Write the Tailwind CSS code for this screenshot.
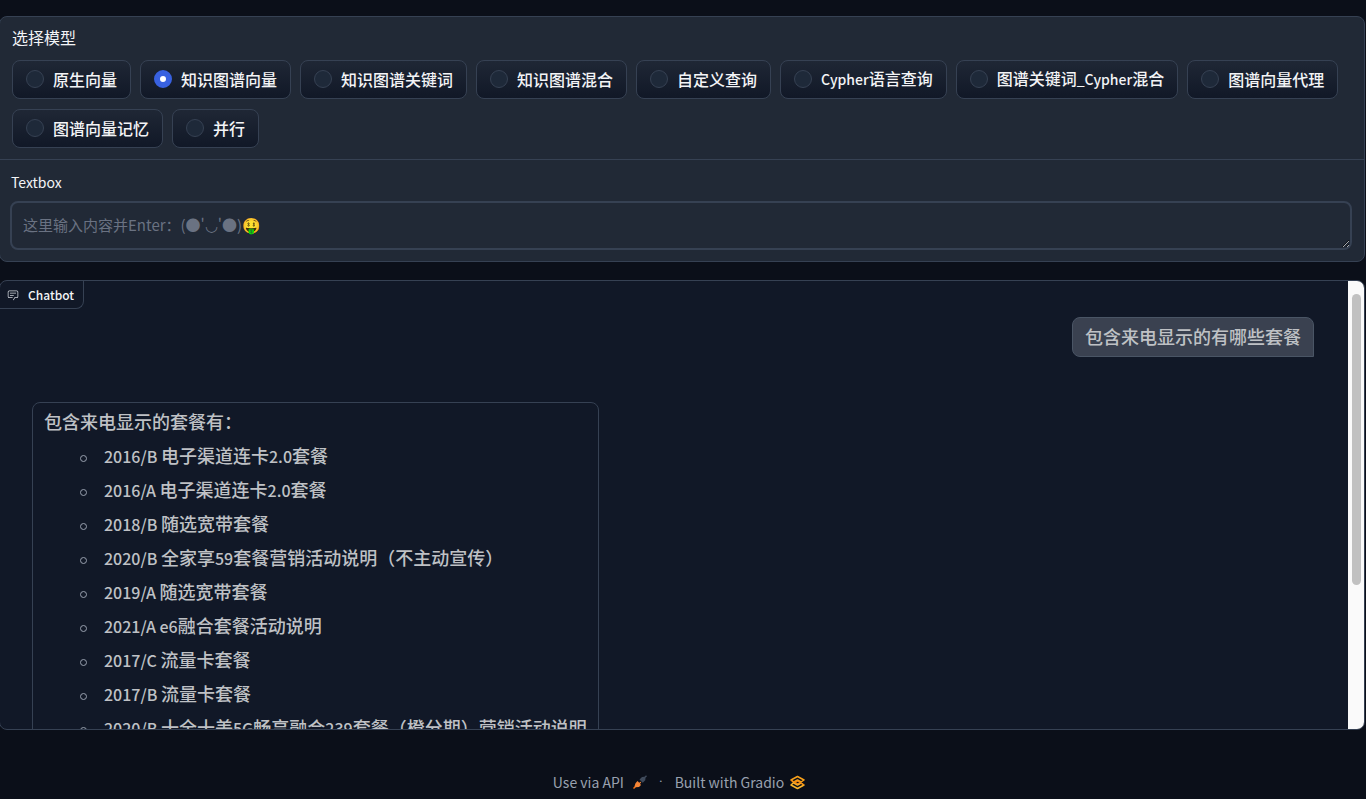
<!DOCTYPE html>
<html lang="zh-CN">
<head>
<meta charset="utf-8">
<meta name="viewport" content="width=device-width, initial-scale=1">
<title>Gradio</title>
<script src="https://cdn.jsdelivr.net/npm/@tailwindcss/browser@4"></script>
</head>
<body class="min-h-screen overflow-x-hidden bg-[#0b0f19] pt-4 font-['Noto_Sans_CJK_SC',sans-serif] text-base leading-6 text-gray-100">
<main class="mr-px -ml-px flex flex-col gap-[18px]">
  <form class="rounded-lg border border-gray-700 bg-[#212936]">
    <fieldset class="border-b border-gray-700 px-3 pt-2 pb-[11px]">
      <legend class="float-left mb-[11px] w-full">选择模型</legend>
      <div class="clear-both flex flex-wrap gap-x-[9px] gap-y-2.5">
        <label class="flex h-[39px] items-center gap-[9px] rounded-lg border border-gray-700 bg-linear-to-b from-[#1f2735] to-[#111827] px-[13px] pb-0.5 font-medium"><input type="radio" name="model" class="size-[18px] appearance-none rounded-full border border-gray-700 bg-gray-800 checked:border-[6px] checked:border-[#3861e0] checked:bg-white">原生向量</label>
        <label class="flex h-[39px] items-center gap-[9px] rounded-lg border border-gray-700 bg-linear-to-b from-[#1f2735] to-[#111827] px-[13px] pb-0.5 font-medium"><input type="radio" name="model" checked class="size-[18px] appearance-none rounded-full border border-gray-700 bg-gray-800 checked:border-[6px] checked:border-[#3861e0] checked:bg-white">知识图谱向量</label>
        <label class="flex h-[39px] items-center gap-[9px] rounded-lg border border-gray-700 bg-linear-to-b from-[#1f2735] to-[#111827] px-[13px] pb-0.5 font-medium"><input type="radio" name="model" class="size-[18px] appearance-none rounded-full border border-gray-700 bg-gray-800 checked:border-[6px] checked:border-[#3861e0] checked:bg-white">知识图谱关键词</label>
        <label class="flex h-[39px] items-center gap-[9px] rounded-lg border border-gray-700 bg-linear-to-b from-[#1f2735] to-[#111827] px-[13px] pb-0.5 font-medium"><input type="radio" name="model" class="size-[18px] appearance-none rounded-full border border-gray-700 bg-gray-800 checked:border-[6px] checked:border-[#3861e0] checked:bg-white">知识图谱混合</label>
        <label class="flex h-[39px] items-center gap-[9px] rounded-lg border border-gray-700 bg-linear-to-b from-[#1f2735] to-[#111827] px-[13px] pb-0.5 font-medium"><input type="radio" name="model" class="size-[18px] appearance-none rounded-full border border-gray-700 bg-gray-800 checked:border-[6px] checked:border-[#3861e0] checked:bg-white">自定义查询</label>
        <label class="flex h-[39px] items-center gap-[9px] rounded-lg border border-gray-700 bg-linear-to-b from-[#1f2735] to-[#111827] px-[13px] pb-0.5 font-medium"><input type="radio" name="model" class="size-[18px] appearance-none rounded-full border border-gray-700 bg-gray-800 checked:border-[6px] checked:border-[#3861e0] checked:bg-white"><span><span class="text-[14px]">Cypher</span>语言查询</span></label>
        <label class="flex h-[39px] items-center gap-[9px] rounded-lg border border-gray-700 bg-linear-to-b from-[#1f2735] to-[#111827] px-[13px] pb-0.5 font-medium"><input type="radio" name="model" class="size-[18px] appearance-none rounded-full border border-gray-700 bg-gray-800 checked:border-[6px] checked:border-[#3861e0] checked:bg-white"><span>图谱关键词<span class="text-[14px]">_Cypher</span>混合</span></label>
        <label class="flex h-[39px] items-center gap-[9px] rounded-lg border border-gray-700 bg-linear-to-b from-[#1f2735] to-[#111827] px-[13px] pb-0.5 font-medium"><input type="radio" name="model" class="size-[18px] appearance-none rounded-full border border-gray-700 bg-gray-800 checked:border-[6px] checked:border-[#3861e0] checked:bg-white">图谱向量代理</label>
        <label class="flex h-[39px] items-center gap-[9px] rounded-lg border border-gray-700 bg-linear-to-b from-[#1f2735] to-[#111827] px-[13px] pb-0.5 font-medium"><input type="radio" name="model" class="size-[18px] appearance-none rounded-full border border-gray-700 bg-gray-800 checked:border-[6px] checked:border-[#3861e0] checked:bg-white">图谱向量记忆</label>
        <label class="flex h-[39px] items-center gap-[9px] rounded-lg border border-gray-700 bg-linear-to-b from-[#1f2735] to-[#111827] px-[13px] pb-0.5 font-medium"><input type="radio" name="model" class="size-[18px] appearance-none rounded-full border border-gray-700 bg-gray-800 checked:border-[6px] checked:border-[#3861e0] checked:bg-white">并行</label>
      </div>
    </fieldset>
    <div class="flex flex-col gap-[7px] pt-2.5 pr-3 pb-[11px] pl-2.5">
      <label for="prompt" class="pl-px text-[14px] leading-6">Textbox</label>
      <textarea id="prompt" rows="1" class="block h-[49px] w-full resize-y overflow-hidden rounded-lg border-2 border-gray-700 bg-transparent px-[11px] py-2.5 text-[15px] leading-6 placeholder:text-gray-500" placeholder="这里输入内容并Enter：(●'◡'●)🤑"></textarea>
    </div>
  </form>

  <section aria-label="Chatbot" class="relative flex h-[450px] overflow-hidden rounded-lg border border-gray-700 bg-[#111827]">
    <h2 class="absolute top-0 left-0 flex h-7 items-center gap-[9px] rounded-br-lg border-r border-b border-gray-700 pr-[9px] pl-[7px] text-[12px] font-medium">
      <svg class="size-[12px] text-gray-300" viewBox="0 0 32 32" fill="currentColor" aria-hidden="true"><path d="M17.740 30 16 29l4-7h6a2 2 0 0 0 2-2V8a2 2 0 0 0-2-2H6a2 2 0 0 0-2 2v12a2 2 0 0 0 2 2h9v2H6a4 4 0 0 1-4-4V8a4 4 0 0 1 4-4h20a4 4 0 0 1 4 4v12a4 4 0 0 1-4 4h-4.840Z"/><path d="M8 10h16v2H8zM8 16h10v2H8z"/></svg>
      Chatbot
    </h2>
    <div class="flex min-w-0 flex-1 flex-col gap-[45px] pt-9 pr-[34px] pl-8 text-lg leading-[26px] font-medium text-[#bfc1c5]">
      <p class="self-end rounded-lg rounded-br-none border border-gray-600 bg-[#3a4150] px-3 pt-[5px] pb-[7px]">包含来电显示的有哪些套餐</p>
      <div class="shrink-0 self-start rounded-lg border border-gray-700 px-[11px] pt-[5px]">
        <p>包含来电显示的套餐有：</p>
        <ul class="mt-2 flex flex-col gap-2 pl-9">
          <li class="before:mr-[17px] before:inline-block before:size-[7px] before:rounded-full before:border before:border-gray-400 before:align-middle before:content-['']"><span class="text-base leading-6">2016/B </span>电子渠道连卡<span class="text-base leading-6">2.0</span>套餐</li>
          <li class="before:mr-[17px] before:inline-block before:size-[7px] before:rounded-full before:border before:border-gray-400 before:align-middle before:content-['']"><span class="text-base leading-6">2016/A </span>电子渠道连卡<span class="text-base leading-6">2.0</span>套餐</li>
          <li class="before:mr-[17px] before:inline-block before:size-[7px] before:rounded-full before:border before:border-gray-400 before:align-middle before:content-['']"><span class="text-base leading-6">2018/B </span>随选宽带套餐</li>
          <li class="before:mr-[17px] before:inline-block before:size-[7px] before:rounded-full before:border before:border-gray-400 before:align-middle before:content-['']"><span class="text-base leading-6">2020/B </span>全家享<span class="text-base leading-6">59</span>套餐营销活动说明（不主动宣传）</li>
          <li class="before:mr-[17px] before:inline-block before:size-[7px] before:rounded-full before:border before:border-gray-400 before:align-middle before:content-['']"><span class="text-base leading-6">2019/A </span>随选宽带套餐</li>
          <li class="before:mr-[17px] before:inline-block before:size-[7px] before:rounded-full before:border before:border-gray-400 before:align-middle before:content-['']"><span class="text-base leading-6">2021/A e6</span>融合套餐活动说明</li>
          <li class="before:mr-[17px] before:inline-block before:size-[7px] before:rounded-full before:border before:border-gray-400 before:align-middle before:content-['']"><span class="text-base leading-6">2017/C </span>流量卡套餐</li>
          <li class="before:mr-[17px] before:inline-block before:size-[7px] before:rounded-full before:border before:border-gray-400 before:align-middle before:content-['']"><span class="text-base leading-6">2017/B </span>流量卡套餐</li>
          <li class="before:mr-[17px] before:inline-block before:size-[7px] before:rounded-full before:border before:border-gray-400 before:align-middle before:content-['']"><span class="text-base leading-6">2020/B </span>十全十美<span class="text-base leading-6">5G</span>畅享融合<span class="text-base leading-6">239</span>套餐（橙分期）营销活动说明</li>
        </ul>
      </div>
    </div>
    <div class="w-4 shrink-0 bg-[#fafafa] pt-[13px] pl-1" aria-hidden="true"><div class="h-[291px] w-[9px] rounded-full bg-[#c1c1c1]"></div></div>
  </section>
</main>
<footer class="mt-10 flex items-center justify-center pr-2 text-[14px] leading-6 text-gray-400">
  <a href="#" class="flex items-center gap-[9px]">Use via API
    <svg class="size-[14px]" viewBox="0 0 28 28" aria-hidden="true"><path d="m1 27 6-6" stroke="#f97316" stroke-width="3"/><path d="M5 16.500 9 12l3.500 3.500 2.500-2 1.500 1.500-2.500 2.500L16 20l-4 4-7 .5-2-2Z" fill="#f58536"/><path d="m13 9 5-5 5-.5L26 .5 28 2.500l-3 3-.5 5-5 5Z" fill="#3f4a5b"/></svg>
  </a>
  <span class="mx-3 font-[Roboto]">·</span>
  <a href="#" class="flex items-center gap-1.5">Built with Gradio
    <svg class="size-[15px]" viewBox="0 0 30 28" fill="none" stroke-linejoin="round" aria-hidden="true"><path d="M2 9 15 2l13 7-6 4-7-4-8 4.500Z" stroke="#f9a11b" stroke-width="3"/><path d="m2 19 13 7 13-7-6-4-7 4-8-4.500Z" stroke="#fbb52c" stroke-width="3"/><path d="m2 9 13 8 5-3M28 19l-13-8-5 3" stroke="#f58a12" stroke-width="2.500"/></svg>
  </a>
</footer>
</body>
</html>
